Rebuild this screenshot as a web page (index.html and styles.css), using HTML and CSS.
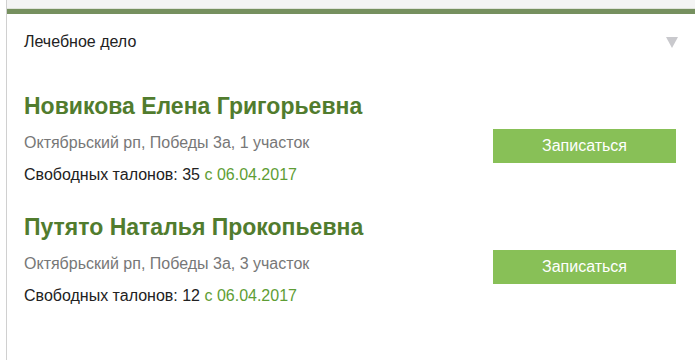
FILE: index.html
```html
<!DOCTYPE html>
<html lang="ru">
<head>
    <meta charset="UTF-8">
    <meta name="viewport" content="width=device-width, initial-scale=1.0">
    <title>Запись к врачу</title>
    <link rel="stylesheet" href="styles.css">
</head>
<body>
    <div class="panel">
        <div class="panel-top"></div>
        <div class="panel-bar"></div>

        <!-- выбор специальности -->
        <div class="speciality">
            <span>Лечебное дело</span>
            <span class="arrow"></span>
        </div>

        <div class="doctor">
            <h2 class="doctor-name">Новикова Елена Григорьевна</h2>
            <div class="doctor-row">
                <div class="doctor-info">
                    <p class="doctor-address">Октябрьский рп, Победы 3а, 1 участок</p>
                    <p class="doctor-free">Свободных талонов: 35 <span class="date">с 06.04.2017</span></p>
                </div>
                <button class="button-sign">Записаться</button>
            </div>
        </div>

        <div class="doctor">
            <h2 class="doctor-name">Путято Наталья Прокопьевна</h2>
            <div class="doctor-row">
                <div class="doctor-info">
                    <p class="doctor-address">Октябрьский рп, Победы 3а, 3 участок</p>
                    <p class="doctor-free">Свободных талонов: 12 <span class="date">с 06.04.2017</span></p>
                </div>
                <button class="button-sign">Записаться</button>
            </div>
        </div>
    </div>
</body>
</html>
```

FILE: styles.css
```css
body {
    margin: 0;
    font-family: "Liberation Sans", Arial, sans-serif;
    background-color: #ffffff;
    color: #222222;
}

.panel {
    margin-left: 6px;
    border-left: 1px solid #d0d0d0;
    height: 360px;
}

.panel-top {
    height: 8px;
    background-color: #f4f4f4;
    border-bottom: 1px solid #dfe3da;
}

.panel-bar {
    height: 5px;
    background-color: #76905f;
}

.speciality {
    display: flex;
    align-items: center;
    justify-content: space-between;
    padding: 17px 17px 0 17px;
    height: 22px;
    font-size: 16px;
    color: #222222;
}

.arrow {
    width: 0;
    height: 0;
    border-left: 6px solid transparent;
    border-right: 6px solid transparent;
    border-top: 11px solid #c9c9cd;
}

.doctor {
    padding: 39px 0 0 17px;
    height: 82px;
}

.doctor-name {
    margin: 0;
    font-size: 23px;
    line-height: 28px;
    font-weight: bold;
    color: #517c2e;
}

.doctor-row {
    display: flex;
    align-items: flex-start;
    justify-content: space-between;
    padding-right: 19px;
}

.doctor-info p {
    margin: 0;
}

.doctor-address {
    padding-top: 13px;
    font-size: 16px;
    line-height: 19px;
    color: #777777;
}

.doctor-free {
    padding-top: 13px;
    font-size: 16px;
    line-height: 19px;
    color: #222222;
}

.date {
    color: #5e9d35;
}

.button-sign {
    margin-top: 9px;
    width: 183px;
    height: 34px;
    border: none;
    background-color: #88c057;
    color: #ffffff;
    font-family: "Liberation Sans", Arial, sans-serif;
    font-size: 16px;
    cursor: pointer;
}

.button-sign:hover {
    background-color: #79b048;
}
```
